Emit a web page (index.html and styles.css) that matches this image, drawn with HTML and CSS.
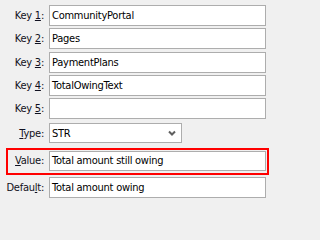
FILE: index.html
```html
<!DOCTYPE html>
<html>
<head>
<meta charset="utf-8">
<link rel="stylesheet" href="styles.css">
</head>
<body>
<div class="form">
  <div class="row"><span class="label">Key <u>1</u>:</span><div class="field">CommunityPortal</div></div>
  <div class="row"><span class="label">Key <u>2</u>:</span><div class="field">Pages</div></div>
  <div class="row"><span class="label">Key <u>3</u>:</span><div class="field">PaymentPlans</div></div>
  <div class="row"><span class="label">Key <u>4</u>:</span><div class="field">TotalOwingText</div></div>
  <div class="row"><span class="label">Key <u>5</u>:</span><div class="field"></div></div>
  <div class="row row-type"><span class="label"><u>T</u>ype:</span><div class="select"><span>STR</span><svg class="chev" width="8" height="6" viewBox="0 0 8 6"><path d="M1 1.5 L4 4.5 L7 1.5" fill="none" stroke="#5f5f5f" stroke-width="2"/></svg></div></div>
  <div class="row row-value"><span class="label"><u>V</u>alue:</span><div class="field field-value">Total amount still owing</div></div>
  <div class="row row-default"><span class="label">Defau<u>l</u>t:</span><div class="field">Total amount owing</div></div>
</div>
</body>
</html>
```
FILE: styles.css
```css
html, body {
  margin: 0;
  padding: 0;
  background: #f0f0f0;
}
body {
  width: 271px;
  height: 202px;
  overflow: hidden;
  font-family: "DejaVu Sans Condensed", "DejaVu Sans", sans-serif;
  font-stretch: condensed;
  font-size: 11px;
  letter-spacing: -0.25px;
  color: #000;
}
.form {
  display: flex;
  flex-direction: column;
  padding-top: 5px;
  gap: 2.25px;
}
.row {
  display: flex;
  align-items: center;
  height: 21px;
}
.label {
  width: 44px;
  margin-right: 5px;
  text-align: right;
  white-space: nowrap;
  color: #101020;
}
.label u {
  text-decoration-thickness: 1px;
  text-underline-offset: 1px;
}
.field {
  box-sizing: border-box;
  width: 217px;
  height: 21px;
  border: 1px solid #adadad;
  background: #fff;
  padding-left: 2px;
  display: flex;
  align-items: center;
  white-space: nowrap;
  overflow: hidden;
}
.row-type {
  margin-top: 2px;
  height: 20px;
}
.select {
  box-sizing: border-box;
  width: 133px;
  height: 20px;
  border: 1px solid #adadad;
  background: #fff;
  padding: 0 5px 0 2px;
  display: flex;
  align-items: center;
  justify-content: space-between;
}
.row-value {
  margin-top: 2px;
  margin-left: 6px;
  width: 263px;
  height: 27px;
  box-sizing: border-box;
  border: 2px solid #ff0000;
  padding: 1px 1px 2px 0;
}
.row-value .label {
  width: 36px;
}
.field-value {
  height: 20px;
}
.row-default {
  margin-top: -0.25px;
}
```
